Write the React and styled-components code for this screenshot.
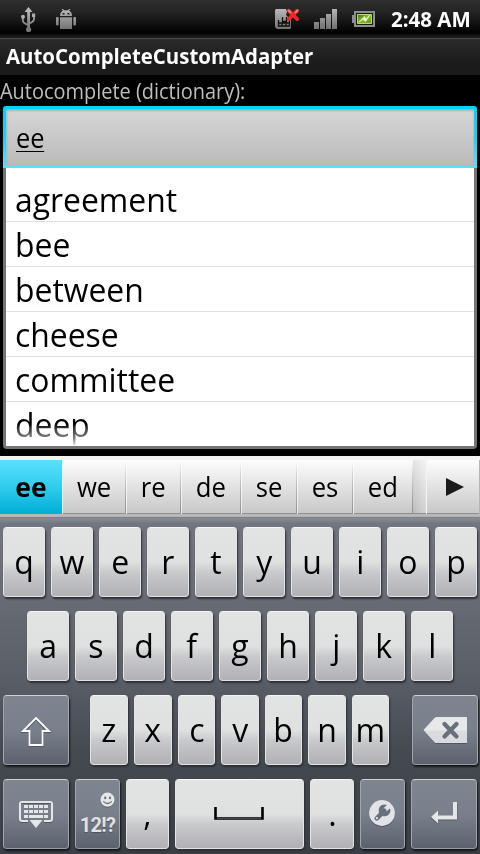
import React from "react";
import styled, { createGlobalStyle, css } from "styled-components";

const Global = createGlobalStyle`
  html, body { margin: 0; background: #000; }
  * { box-sizing: border-box; }
`;

const Screen = styled.div`
  width: 480px;
  height: 854px;
  overflow: hidden;
  display: flex;
  flex-direction: column;
  background: #000;
  font-family: "Open Sans", "Noto Sans", sans-serif;
  color: #000;
  white-space: nowrap;
`;

/* Slightly condenses a run of text horizontally. */
const Narrow = styled.span`
  display: inline-block;
  transform: scaleX(${(p) => p.$x});
  transform-origin: ${(p) => p.$origin || "left"};
`;

const StatusBar = styled.header`
  height: 38px;
  flex: none;
  display: flex;
  align-items: center;
  justify-content: space-between;
  padding: 0 9px 0 20px;
  background: linear-gradient(#2e2e2e 0, #242424 12px, #060606 30px, #000 33px, #111 35px, #202020 38px);
`;

const IconGroup = styled.div`
  display: flex;
  align-items: center;
  gap: ${(p) => p.$gap}px;
`;

const Clock = styled.span`
  color: #fff;
  font-size: 21px;
  font-weight: 700;
  line-height: 38px;
  width: 80px;
  margin-left: 1px;
`;

const TitleBar = styled.h1`
  margin: 0;
  height: 37px;
  flex: none;
  padding-left: 6px;
  border-top: 1px solid #494949;
  background: linear-gradient(#2c2c2c, #1c1c1c 60%, #1a1a1a);
  color: #fff;
  font-size: 21px;
  font-weight: 700;
  line-height: 34px;
`;

const FieldLabel = styled.label`
  height: 31px;
  flex: none;
  color: #bebebe;
  font-size: 21px;
  line-height: 32px;
`;

const Field = styled.div`
  flex: none;
  height: 62px;
  margin: 0 3px;
  padding: 3px 3px 2px;
  border-radius: 3px 3px 0 0;
  background: linear-gradient(#00d2ff, #12d2fb 50%, #5be0ff);
`;

const FieldInner = styled.div`
  height: 57px;
  padding-left: 10px;
  background: linear-gradient(#d6d6d6, #bababa);
  box-shadow: inset 0 2px 2px #b0b0b0, inset 1px 0 2px #b4b4b4;
  font-size: 27px;
  line-height: 57px;
`;

const Typed = styled(Narrow)`
  height: 43px;
  border-bottom: 1px solid #000;
`;

const Dropdown = styled.ul`
  list-style: none;
  margin: 0 3px;
  padding: 9px 0 0;
  height: 281px;
  flex: none;
  overflow: hidden;
  border: solid #747474;
  border-width: 0 3px 3px;
  border-radius: 0 0 4px 4px;
  background: #fff;
`;

const Option = styled.li`
  height: 45px;
  padding-left: 9px;
  border-bottom: 1px solid #e0e0e0;
  font-size: 33px;
  line-height: 46px;
  ${(p) =>
    p.$fading &&
    css`
      border: 0;
      mask-image: linear-gradient(#000 22px, rgba(0, 0, 0, 0.8) 26px, rgba(0, 0, 0, 0.5) 36px, transparent 45px);
    `}
`;

const Keyboard = styled.section`
  flex: none;
  margin-top: 7px;
  height: 398px;
  display: flex;
  flex-direction: column;
`;

const SuggestionStrip = styled.div`
  flex: none;
  height: 62px;
  display: flex;
  border-top: 4px solid #f3f3f3;
  background: linear-gradient(#f7f7f7 0, #c3c3c3 53px, #8d8d8d 53px, #8d8d8d 54px, #bababa 54px, #b5b5b5 57px, #7c7f84 57px);
`;

const Suggestion = styled.div`
  width: ${(p) => p.$w}px;
  height: 54px;
  flex: none;
  text-align: center;
  font-size: 27px;
  line-height: 54px;
  background: linear-gradient(transparent, #909090) right / 1px 100% no-repeat,
    linear-gradient(#fff, #ececec) left / 1px 100% no-repeat,
    linear-gradient(#fdfdfd, #c8c8c8 53px, #8d8d8d 53px);
  ${(p) =>
    p.$active &&
    css`
      font-weight: 700;
      background: linear-gradient(#5ae0ff, #35cfee 45%, #00aed6);
    `}
`;

const StripGap = styled.div`
  width: 13px;
  height: 53px;
  background: linear-gradient(90deg, rgba(120, 120, 120, 0.1), rgba(255, 255, 255, 0.25)), linear-gradient(#f0f0f0, #c4c4c4);
`;

const MoreButton = styled.div`
  width: 54px;
  height: 54px;
  display: flex;
  align-items: center;
  justify-content: center;
  padding-left: 4px;
  border-left: 1px solid #f3f3f3;
  border-right: 1px solid #b5b5b5;
  background: linear-gradient(#fdfdfd, #c8c8c8 53px, #8d8d8d 53px);
`;

const KeyArea = styled.div`
  flex: 1;
  padding: 9px 0 0;
  display: flex;
  flex-direction: column;
  gap: 14px;
  background: linear-gradient(#868d95 0, #70767f 6px, #676b74 80px, #595e67 160px, #454a51 235px, #3a3f45);
`;

const KeyRow = styled.div`
  display: flex;
  gap: 6px;
  padding-left: ${(p) => p.$inset}px;
`;

const Key = styled.div`
  width: ${(p) => p.$w}px;
  height: 70px;
  flex: none;
  display: flex;
  justify-content: center;
  margin-left: ${(p) => p.$before || 0}px;
  border-radius: 4px;
  border: 1px solid;
  font-size: 33px;
  line-height: 67px;
  ${(p) =>
    p.$dark
      ? css`
          border-color: #ced2d5 #a0a6ae #939aa4 #a0a6ae;
          background: linear-gradient(#7e858f, #79808c 50%, #5b626e);
          box-shadow: 1px 2px 2px #14171b;
        `
      : css`
          border-color: #f6f6f6 #e5e5e6 #e2e2e4 #e5e5e6;
          background: linear-gradient(#e2e3e3, #dfe1e0 50%, #c9cacc 65%, #b0b0b5);
          box-shadow: 1px 2px 2px #2b2f35;
        `}
`;

const KeyIcon = styled.svg`
  display: block;
  flex: none;
  margin: -1px;
`;

const SymbolKeyFace = styled.div`
  display: flex;
  flex-direction: column;
  align-items: center;
  padding-top: 12px;
`;

const Smiley = styled.svg`
  align-self: flex-end;
`;

const SymbolLabel = styled.span`
  margin-top: 3px;
  font-family: Roboto, sans-serif;
  font-size: 20px;
  font-weight: 700;
  line-height: 28px;
  letter-spacing: -0.7px;
  color: #e0e2e5;
  text-shadow: 0 1px 1px #4a505a;
`;

const Metal = ({ id }) => (
  <linearGradient id={id} gradientUnits="userSpaceOnUse" x1="0" y1="8" x2="0" y2="30">
    <stop offset="0" stopColor="#bcbcbc" />
    <stop offset="1" stopColor="#707070" />
  </linearGradient>
);

const UsbIcon = () => (
  <svg width="17" height="27" viewBox="20 5 17 27">
    <defs><Metal id="usb" /></defs>
    <g fill="none" stroke="url(#usb)" strokeWidth="1.8">
      <path d="M22.800 16v3.500q0 2.500 5.500 4.500M34 14v4q0 3-5.500 4.500" />
    </g>
    <path d="M28.500 6 32.500 11H30V27H27.200V11H24.500Z" fill="url(#usb)" />
    <circle cx="28.600" cy="28.500" r="2.600" fill="#777" />
    <circle cx="23" cy="15.700" r="2" fill="#b0b0b0" />
    <path d="M32 12.500h3.200v3.500H32z" fill="#aaa" />
  </svg>
);

const RobotIcon = () => (
  <svg width="20" height="22" viewBox="56 8 20 22">
    <defs><Metal id="robot" /></defs>
    <g fill="url(#robot)">
      <path d="M60 16q0-4 3-5.300L61.500 9h1.300l1.500 1.300h3.500L69.300 9h1.200L69 10.700q3 1.300 3 5.300Z" />
      <rect x="60" y="17.300" width="12" height="11.700" />
      <rect x="56" y="17" width="2.700" height="8.500" rx="1" />
      <rect x="73.300" y="17" width="2.700" height="8.500" rx="1" />
    </g>
    <path d="M62.500 13h2v1.500h-2zM67.500 13h2v1.500h-2z" fill="#222" />
  </svg>
);

const SimIcon = () => (
  <svg width="25" height="22" viewBox="275 8 25 22">
    <defs><Metal id="sim" /></defs>
    <path d="M276 9h10l1 3-1 3 2 2h3v11l-1 1h-13l-2-2V10Z" fill="url(#sim)" />
    <path d="M278.500 20v6h11v-6M282.500 17v4.500h4V17M278.500 23h11M282 23v3M286 23v3" stroke="#111" fill="none" strokeWidth="1.300" />
    <path d="m288.800 10.700 8.400 8.400m0-8.400-8.400 8.400" stroke="#ed2727" strokeWidth="3.800" strokeLinecap="round" />
    <path d="m288.500 10.500 2 2m7-2-2 2" stroke="#ff7770" strokeWidth="2" strokeLinecap="round" />
  </svg>
);

const SignalIcon = () => (
  <svg width="24" height="22" viewBox="314 9 24 22">
    <defs><Metal id="signal" /></defs>
    <g fill="url(#signal)">
      <path d="M314 23h5v7h-5z" /><path d="M320 19h5v11h-5z" />
      <path d="M326 15h5v15h-5z" /><path d="M332 10h5v20h-5z" />
    </g>
  </svg>
);

const BatteryIcon = () => (
  <svg width="24" height="18" viewBox="352 10 24 18">
    <defs>
      <linearGradient id="charge" x1="0" y1="0" x2="1" y2="1">
        <stop offset="0" stopColor="#456414" /><stop offset=".45" stopColor="#8cbe2b" /><stop offset="1" stopColor="#62960c" />
      </linearGradient>
    </defs>
    <path d="M354 11h21v16h-21v-4h-2v-8h2z" fill="#8e8e8e" />
    <path d="M356 13h17v12h-17z" fill="#171d0c" />
    <path d="M357.500 14.500h14v9h-14z" fill="url(#charge)" stroke="#bada73" strokeWidth="1" />
    <path d="m359 22 5.500-5.500 1.500 2.500 4-4-4.500 6.500-2.500-2.300Z" fill="#fff" stroke="#e5f5b5" strokeWidth=".6" />
  </svg>
);

const ShiftIcon = () => (
  <KeyIcon width="66" height="70" viewBox="3 695 66 70">
    <path d="m36 718 13 13h-6.500v14h-13v-14H23Z" transform="translate(0 1)" fill="none" stroke="#515863" strokeWidth="2.200" />
    <path d="m36 718 13 13h-6.500v14h-13v-14H23Z" fill="none" stroke="#fff" strokeWidth="1.800" />
  </KeyIcon>
);

const DeleteIcon = () => (
  <KeyIcon width="66" height="70" viewBox="412 695 66 70">
    <path d="m424 731 11-12q1-1 2-1h30v26h-30q-1 0-2-1Z" fill="#505762" />
    <path d="m423.500 730 11-12q1-1 2-1H466q1 0 1 1v24q0 1-1 1h-29.500q-1 0-2-1Z" fill="#e6e8ea" />
    <path d="M424 730.500H467V742q0 1-1 1h-29.500q-1 0-2-1Z" fill="#d9dbde" />
    <path d="m444.500 724 12 12.500m0-12.500-12 12.500" stroke="#69707c" strokeWidth="4.300" strokeLinecap="round" />
  </KeyIcon>
);

const HideIcon = () => (
  <KeyIcon width="66" height="70" viewBox="3 779 66 70">
    <path d="M28 822h-6q-2 0-2-2v-15q0-2 2-2h28q2 0 2 2v15q0 2-2 2h-6" fill="none" stroke="#4f5661" strokeWidth="2" />
    <path d="M28 821h-6q-2 0-2-2v-15q0-2 2-2h28q2 0 2 2v15q0 2-2 2h-6" fill="none" stroke="#e4e6e8" strokeWidth="2" />
    <g fill="#e4e6e8">
      {[0, 1, 2, 3, 4].map((i) => (
        <React.Fragment key={i}>
          <rect x={24 + i * 5} y="805" width="4" height="3" />
          <rect x={24 + i * 5} y="810" width="4" height="3" />
        </React.Fragment>
      ))}
      <path d="M24 815h4v3h-4zM29 815h14v3H29zM44 815h4v3h-4z" />
      <path d="M29.500 820h13L36 828Z" />
    </g>
  </KeyIcon>
);

const SmileyIcon = () => (
  <Smiley width="15" height="16" viewBox="0 0 15 16">
    <circle cx="7.500" cy="8.500" r="7.200" fill="#565d68" />
    <circle cx="7.500" cy="7.700" r="7.100" fill="#e5e7e9" />
    <ellipse cx="5.200" cy="5.900" rx="1.100" ry="1.400" fill="#69707b" />
    <ellipse cx="10" cy="5.900" rx="1.100" ry="1.400" fill="#69707b" />
    <path d="M3.300 9.400q4.200 4.200 8.400 0" fill="none" stroke="#69707b" strokeWidth="1.300" />
  </Smiley>
);

const SpaceIcon = () => (
  <KeyIcon width="129" height="70" viewBox="175 779 129 70">
    <path d="M215.500 807v11.500h47V807" fill="none" stroke="#000" strokeWidth="2.600" />
    <path d="M217 818.500h44" stroke="#444" strokeWidth="1" />
  </KeyIcon>
);

const SettingsIcon = () => (
  <KeyIcon width="45" height="70" viewBox="360 779 45 70">
    <circle cx="382" cy="813.800" r="13" fill="#525965" />
    <circle cx="382" cy="813" r="12.900" fill="#e1e3e6" />
    <path d="m376.800 818.300 7.500-7.500" stroke="#69707c" strokeWidth="4.600" strokeLinecap="round" />
    <path d="M387 805a5.900 5.900 0 1 0 3 3.200l-3.200 3-2.600-.6-.5-2.500Z" fill="#69707c" />
    <circle cx="376.900" cy="818.200" r="1.100" fill="#e1e3e6" />
  </KeyIcon>
);

const EnterIcon = () => (
  <KeyIcon width="66" height="70" viewBox="411 779 66 70">
    <path d="M453 803h4.500v17.500H438v4l-7.500-6.500 7.500-6.500v4.500h15Z" fill="#525965" />
    <path d="M453 802h4v17.500h-19v4l-7-6.500 7-6.500v5h15Z" fill="#e3e5e7" />
  </KeyIcon>
);

const LetterKey = ({ children, ...size }) => (
  <Key {...size}>
    <Narrow $x={0.97} $origin="center">{children}</Narrow>
  </Key>
);

const options = ["agreement", "bee", "between", "cheese", "committee", "deep"];
const suggestions = [["ee", 62], ["we", 64], ["re", 55], ["de", 60], ["se", 56], ["es", 56], ["ed", 60]];
const bottomLetters = [["z", 38], ["x", 38], ["c", 37], ["v", 38], ["b", 37], ["n", 38], ["m", 37]];

export default function App() {
  return (
    <Screen>
      <Global />
      <StatusBar>
        <IconGroup $gap={19}>
          <UsbIcon />
          <RobotIcon />
        </IconGroup>
        <IconGroup $gap={14}>
          <SimIcon />
          <SignalIcon />
          <BatteryIcon />
          <Clock><Narrow $x={0.975}>2:48 AM</Narrow></Clock>
        </IconGroup>
      </StatusBar>
      <TitleBar><Narrow $x={0.972}>AutoCompleteCustomAdapter</Narrow></TitleBar>
      <FieldLabel><Narrow $x={0.95}>Autocomplete (dictionary):</Narrow></FieldLabel>
      <Field>
        <FieldInner>
          <Typed $x={0.94}>ee</Typed>
        </FieldInner>
      </Field>
      <Dropdown>
        {options.map((word, i) => (
          <Option key={word} $fading={i === options.length - 1}>
            <Narrow $x={0.966}>{word}</Narrow>
          </Option>
        ))}
      </Dropdown>
      <Keyboard>
        <SuggestionStrip>
          {suggestions.map(([word, w], i) => (
            <Suggestion key={word} $w={w} $active={i === 0}>
              <Narrow $x={i === 0 ? 0.98 : 0.95} $origin="center">{word}</Narrow>
            </Suggestion>
          ))}
          <StripGap />
          <MoreButton>
            <svg width="18" height="20" viewBox="0 0 18 20">
              <path d="M0 1 18 10 0 19Z" fill="#1a1a1a" />
            </svg>
          </MoreButton>
        </SuggestionStrip>
        <KeyArea>
          <KeyRow $inset={3}>
            {[..."qwertyuiop"].map((c) => <LetterKey key={c} $w={42}>{c}</LetterKey>)}
          </KeyRow>
          <KeyRow $inset={27}>
            {[..."asdfghjkl"].map((c) => <LetterKey key={c} $w={42}>{c}</LetterKey>)}
          </KeyRow>
          <KeyRow $inset={3}>
            <Key $w={66} $dark><ShiftIcon /></Key>
            {bottomLetters.map(([c, w], i) => <LetterKey key={c} $w={w} $before={i === 0 ? 15 : 0}>{c}</LetterKey>)}
            <Key $w={66} $dark $before={17}><DeleteIcon /></Key>
          </KeyRow>
          <KeyRow $inset={3}>
            <Key $w={66} $dark><HideIcon /></Key>
            <Key $w={45} $dark>
              <SymbolKeyFace>
                <SmileyIcon />
                <SymbolLabel>12!?</SymbolLabel>
              </SymbolKeyFace>
            </Key>
            <LetterKey $w={43}>,</LetterKey>
            <Key $w={129}><SpaceIcon /></Key>
            <LetterKey $w={44}>.</LetterKey>
            <Key $w={45} $dark><SettingsIcon /></Key>
            <Key $w={66} $dark><EnterIcon /></Key>
          </KeyRow>
        </KeyArea>
      </Keyboard>
    </Screen>
  );
}
